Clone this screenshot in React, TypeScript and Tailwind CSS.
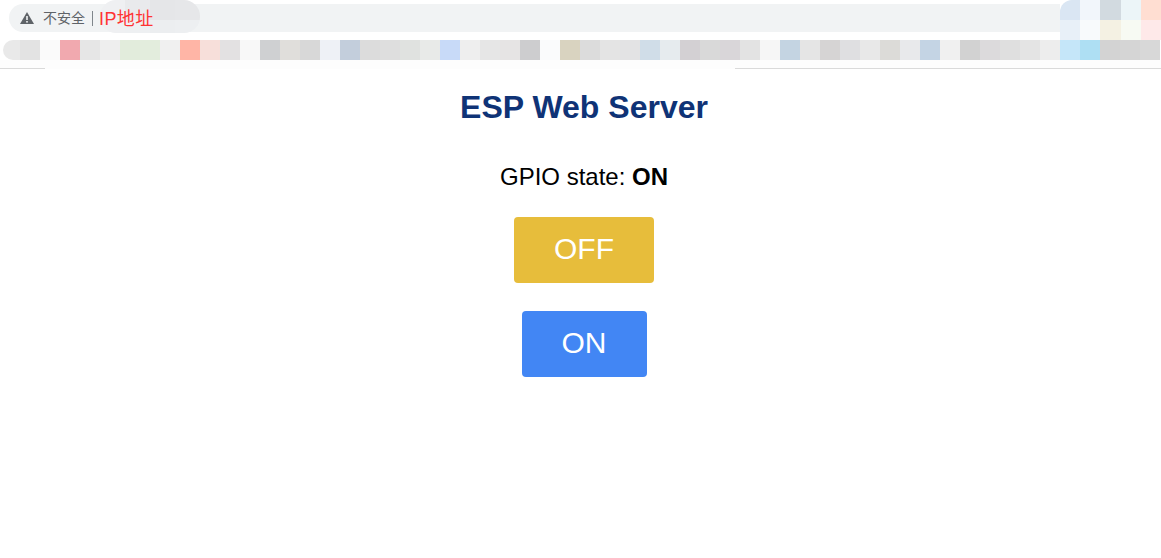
const font = "[font-family:'Liberation_Sans','Noto_Sans_CJK_SC',sans-serif]";

const bookmarks = [
  "ml-[3px] w-[17px] bg-[#e9e9e9] rounded-l-xl", "w-5 bg-[#e3e3e3]", "w-5 bg-[#fafafa]", "w-5 bg-[#f1a9af]", "w-5 bg-[#e6e6e6]", "w-5 bg-[#eeeeee]",
  "w-5 bg-[#e2ecdc]", "w-5 bg-[#e3eddd]", "w-5 bg-[#f0f0f0]", "w-5 bg-[#ffb5a6]", "w-5 bg-[#f7dfda]", "w-5 bg-[#e3e1e2]",
  "w-5 bg-[#f8f8f8]", "w-5 bg-[#cfd0d2]", "w-5 bg-[#e0dedb]", "w-5 bg-[#d8d8d8]", "w-5 bg-[#eef1f6]", "w-5 bg-[#c3cedc]",
  "w-5 bg-[#dcdcdc]", "w-5 bg-[#dedede]", "w-5 bg-[#e0e2e0]", "w-5 bg-[#e8eae8]", "w-5 bg-[#c8daf8]", "w-5 bg-[#eeeeee]",
  "w-5 bg-[#e6e6e6]", "w-5 bg-[#e6e4e4]", "w-5 bg-[#cdcdcf]", "w-5 bg-[#fafbfc]", "w-5 bg-[#d9d3c0]", "w-5 bg-[#dcdcdc]",
  "w-5 bg-[#e4e4e4]", "w-5 bg-[#e3e3e4]", "w-5 bg-[#d0dde8]", "w-5 bg-[#e6ebee]", "w-5 bg-[#d3d0d3]", "w-5 bg-[#d9d9d9]",
  "w-5 bg-[#d9d6d9]", "w-5 bg-[#e3e3e3]", "w-5 bg-[#f6f6f6]", "w-5 bg-[#c4d4e2]", "w-5 bg-[#e5e5e5]", "w-5 bg-[#d6d4d4]",
  "w-5 bg-[#dfdfe1]", "w-5 bg-[#e8e8e8]", "w-5 bg-[#dcdbd8]", "w-5 bg-[#e8e9eb]", "w-5 bg-[#c4d4e4]", "w-5 bg-[#f0f0f0]",
  "w-5 bg-[#d2d2d2]", "w-5 bg-[#dcdadc]", "w-5 bg-[#dfdfdf]", "w-5 bg-[#e4e4e4]", "w-5 bg-[#ededed]", "w-5 bg-[#c5e6f9]",
  "w-5 bg-[#aedff3]", "w-5 bg-[#d3d3d3]", "w-5 bg-[#d5d5d5]", "w-5 bg-[#d8d8d8]",
];

const corner = [
  "bg-[#dae6f3] rounded-tl-xl", "bg-[#f2f6fb]", "bg-[#d2dae0]", "bg-[#ecf5f8]", "bg-[#ffded2]",
  "bg-[#e8f0f8]", "bg-[#f8fafc]", "bg-[#f4f1e3]", "bg-[#f7faf3]", "bg-[#fee9e9]",
];

const blotch = ["bg-[#eff0f2]", "bg-[#e9eaec]", "bg-[#e5e6e8]", "bg-[#e6e7e9]", "bg-[#eff0f2]", "bg-[#eef0f2]", "bg-[#eceef0]", "bg-[#edeff1]"];

export default function App() {
  return (
    <div className={`min-h-[558px] bg-white ${font}`}>
      <header className="relative">
        <div className="flex h-10">
          <div className="flex-1 pt-1 pl-[9px]">
            <div className="relative flex h-7 items-center rounded-l-[14px] bg-[#f1f3f4] pl-[11px]">
              <svg width="14" height="12" viewBox="0 0 14 12" className="shrink-0">
                <path d="M7 0 L14 12 L0 12 Z" fill="#5f6368" />
                <rect x="6.2" y="4" width="1.6" height="4" fill="#f1f3f4" />
                <rect x="6.2" y="9" width="1.6" height="1.6" fill="#f1f3f4" />
              </svg>
              <span className="ml-[9px] text-[14px] text-[#5f6368]">不安全</span>
              <span className="ml-[7px] h-[15px] w-px bg-[#80868b]" />
              <span className="relative z-10 mt-[2px] ml-[6px] text-[18px] leading-none tracking-[0.4px] text-[#ff3333]">IP地址</span>
              <div className="absolute top-[-4px] left-[91px] grid h-[33px] w-[100px] grid-cols-4 grid-rows-[20px_13px] overflow-hidden rounded-[16px]">
                {blotch.map((c, i) => (
                  <div key={i} className={c} />
                ))}
              </div>
            </div>
          </div>
          <div className="grid w-[101px] grid-cols-5 grid-rows-2">
            {corner.map((c, i) => (
              <div key={i} className={c} />
            ))}
          </div>
        </div>
        <div className="flex h-5">
          {bookmarks.map((c, i) => (
            <div key={i} className={`h-5 shrink-0 ${c}`} />
          ))}
        </div>
        <div className="h-2 bg-[#fdfdfd]" />
        <div className="flex h-px">
          <div className="w-[45px] bg-[#dadada]" />
          <div className="w-[690px] bg-[#fdfdfd]" />
          <div className="flex-1 bg-[#dadada]" />
        </div>
      </header>
      <main className="flex flex-col items-center pl-[7px]">
        <h1 className="mt-[20px] text-[32px] leading-[37px] font-bold text-[#0f3376]">ESP Web Server</h1>
        <p className="mt-[37px] text-[24px] leading-[28px] text-black">
          GPIO state: <strong className="font-bold">ON</strong>
        </p>
        <button className="mt-[26px] rounded bg-[#e7bd3b] px-10 pt-[15px] pb-[17px] text-[30px] leading-[34px] text-white">OFF</button>
        <button className="mt-[28px] rounded bg-[#4286f4] px-10 pt-[15px] pb-[17px] text-[30px] leading-[34px] text-white">ON</button>
      </main>
    </div>
  );
}
